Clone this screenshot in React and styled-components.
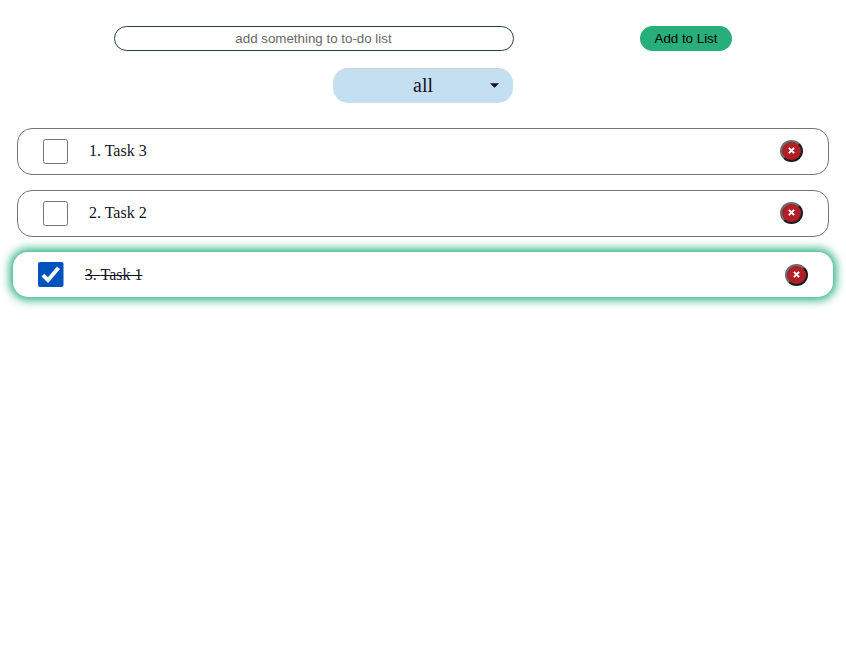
import React, { useState } from "react";
import styled, { createGlobalStyle, css } from "styled-components";

const GlobalStyle = createGlobalStyle`
  * { box-sizing: border-box; }
  body {
    margin: 0;
    background: #fff;
    color: #14121f;
    font-family: "Liberation Serif", "Times New Roman", serif;
  }
`;

const Page = styled.main`
  display: flex;
  flex-direction: column;
  align-items: center;
  min-height: 100vh;
  padding-top: 26px;
`;

const AddForm = styled.form`
  display: flex;
  align-self: stretch;
  gap: 126px;
  padding-left: 114px;
`;

const TaskInput = styled.input`
  width: 400px;
  height: 25px;
  padding: 0 3px 0 2px;
  border: 1px solid #2c3e50;
  border-radius: 15px;
  background: #fff;
  text-align: center;
  font: 13.333px "Liberation Sans", Arial, sans-serif;
  outline: none;
  &::placeholder { color: #686868; }
`;

const AddButton = styled.button`
  width: 92px;
  height: 25px;
  padding: 0;
  border: 0;
  border-radius: 15px;
  background: #27ae7a;
  color: #000;
  font: 13.333px "Liberation Sans", Arial, sans-serif;
`;

const Filter = styled.button`
  display: grid;
  grid-template-columns: 1fr 38px;
  align-items: center;
  width: 180px;
  height: 35px;
  margin-top: 17px;
  padding: 0 0 2px 38px;
  border: 0;
  border-top: 1px solid #d0d3d6;
  border-radius: 15px;
  background: #c5dff2;
  color: #14121f;
  font: 20px/23px "Liberation Serif", "Times New Roman", serif;
`;

const Caret = styled.svg`
  width: 9px;
  height: 5px;
  margin-left: 15px;
  fill: #14121f;
`;

const List = styled.ul`
  align-self: stretch;
  display: flex;
  flex-direction: column;
  gap: 15px;
  margin: 25px 17px 0;
  padding: 0;
  list-style: none;
`;

const Card = styled.li`
  display: flex;
  align-items: center;
  height: 47px;
  padding: 0 25px 1px;
  border: 1px solid #757575;
  border-radius: 15px;
  background: #fff;
  font-size: 16px;
  line-height: 18px;
  ${({ $done }) => $done && css`
    height: 45px;
    margin: 0 -4px 0 -4.5px;
    padding: 0 25.5px 0 25px;
    border: 0;
    box-shadow: 0 0 10px 3px #27ae7a;
    text-decoration: line-through;
  `}
`;

const Check = styled.button`
  display: block;
  width: 26px;
  height: 26px;
  margin-left: ${({ $on }) => ($on ? "0.5px" : "0")};
  padding: 0;
  border: 0;
  background: none;
  svg { display: block; }
`;

const Label = styled.span`
  width: 58px;
  margin-left: ${({ $done }) => ($done ? "20.5px" : "19.7px")};
  text-align: right;
  white-space: nowrap;
`;

const Remove = styled.button`
  display: grid;
  place-items: center;
  width: 23px;
  height: 22px;
  margin-left: auto;
  padding: 0 0 1px;
  border: 2px solid;
  border-color: #6b6b6b #1c1c1c #1c1c1c #6b6b6b;
  border-radius: 50%;
  background: #b01f28;
`;

function CheckIcon({ on }) {
  return (
    <svg width="26" height="26" viewBox="0 0 26 26">
      {on ? (
        <>
          <rect x="0" y="0" width="25.5" height="25" rx="2" fill="#0052bd" />
          <path d="M4.9 13.2 10 18.2 20.5 5.7" fill="none" stroke="#fff" strokeWidth="3.9" />
        </>
      ) : (
        <rect x="0.5" y="1.5" width="24" height="24" rx="2" fill="#fff" stroke="#757575" />
      )}
    </svg>
  );
}

function App() {
  const [tasks, setTasks] = useState([
    { name: "Task 3", done: false },
    { name: "Task 2", done: false },
    { name: "Task 1", done: true },
  ]);
  const [text, setText] = useState("");

  const add = (e) => {
    e.preventDefault();
    if (!text.trim()) return;
    setTasks([{ name: text.trim(), done: false }, ...tasks]);
    setText("");
  };
  const toggle = (i) =>
    setTasks(tasks.map((t, n) => (n === i ? { ...t, done: !t.done } : t)));
  const remove = (i) => setTasks(tasks.filter((_, n) => n !== i));

  return (
    <>
      <GlobalStyle />
      <Page>
        <AddForm onSubmit={add}>
          <TaskInput
            value={text}
            onChange={(e) => setText(e.target.value)}
            placeholder="add something to to-do list"
          />
          <AddButton type="submit">Add to List</AddButton>
        </AddForm>
        <Filter type="button">
          <span>all</span>
          <Caret viewBox="0 0 9 5"><path d="M0 0.3H9L5.2 4.3Q4.5 4.9 3.8 4.3Z" /></Caret>
        </Filter>
        <List>
          {tasks.map((task, i) => (
            <Card key={task.name} $done={task.done}>
              <Check type="button" $on={task.done} onClick={() => toggle(i)}>
                <CheckIcon on={task.done} />
              </Check>
              <Label $done={task.done}>{i + 1}. {task.name}</Label>
              <Remove type="button" onClick={() => remove(i)}>
                <svg width="7" height="7" viewBox="0 0 7 7">
                  <path d="M0.9 0.9 6.1 6.1M6.1 0.9 0.9 6.1" stroke="#fff" strokeWidth="2" />
                </svg>
              </Remove>
            </Card>
          ))}
        </List>
      </Page>
    </>
  );
}

export default App;
